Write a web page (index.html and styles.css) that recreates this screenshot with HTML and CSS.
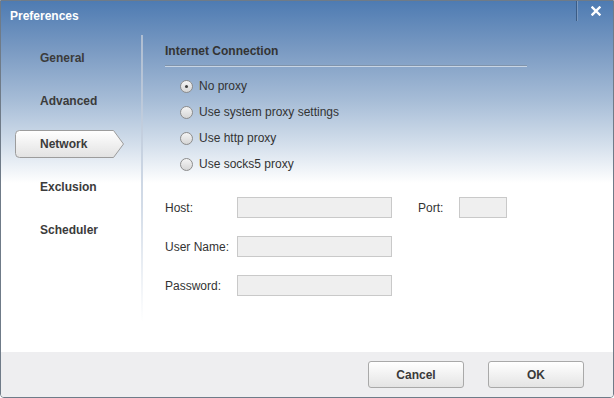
FILE: index.html
```html
<!DOCTYPE html>
<html lang="en">
<head>
    <meta charset="UTF-8">
    <title>Preferences</title>
    <link rel="stylesheet" href="styles.css">
</head>
<body>
    <div class="window">
        <div class="titlebar">
            <div class="title">Preferences</div>
            <div class="close">
                <svg width="10" height="10" viewBox="0 0 10 10"><path d="M1.5 1.5 L8.5 8.5 M8.5 1.5 L1.5 8.5" stroke="#fff" stroke-width="2.4" stroke-linecap="square"/></svg>
            </div>
        </div>

        <div class="main">
            <div class="sidebar">
                <div class="nav-item">General</div>
                <div class="nav-item">Advanced</div>
                <div class="nav-item active">
                    <svg class="tab-shape" width="110" height="29" viewBox="0 0 110 29">
                        <defs>
                            <linearGradient id="tabfill" x1="0" y1="0" x2="0" y2="1">
                                <stop offset="0" stop-color="#ffffff"/>
                                <stop offset="1" stop-color="#e2e2e2"/>
                            </linearGradient>
                        </defs>
                        <path d="M4.5 0.5 H98.5 L108.5 14 L98.5 27.5 H4.5 Q0.5 27.5 0.5 23.5 V4.5 Q0.5 0.5 4.5 0.5 Z" fill="url(#tabfill)" stroke="#9c9c9c"/>
                    </svg>
                    <span>Network</span>
                </div>
                <div class="nav-item">Exclusion</div>
                <div class="nav-item">Scheduler</div>
            </div>
            <div class="divider"></div>

            <div class="content">
                <div class="section-title">Internet Connection</div>

                <div class="radios">
                    <div class="radio-row"><span class="radio checked"></span>No proxy</div>
                    <div class="radio-row"><span class="radio"></span>Use system proxy settings</div>
                    <div class="radio-row"><span class="radio"></span>Use http proxy</div>
                    <div class="radio-row"><span class="radio"></span>Use socks5 proxy</div>
                </div>

                <div class="form">
                    <div class="form-row">
                        <span class="field-label">Host:</span>
                        <span class="field"></span>
                        <span class="port-label">Port:</span>
                        <span class="field port"></span>
                    </div>
                    <div class="form-row">
                        <span class="field-label">User Name:</span>
                        <span class="field"></span>
                    </div>
                    <div class="form-row">
                        <span class="field-label">Password:</span>
                        <span class="field"></span>
                    </div>
                </div>
            </div>
        </div>

        <div class="footer">
            <button class="btn">Cancel</button>
            <button class="btn">OK</button>
        </div>
    </div>
</body>
</html>
```

FILE: styles.css
```css
body, html {
    margin: 0;
    font-family: "Liberation Sans", Arial, sans-serif;
    font-size: 12px;
    background-color: #ffffff;
}
.window {
    width: 614px;
    height: 398px;
    box-sizing: border-box;
    border: 1px solid #6f7b88;
    border-radius: 0 0 4px 4px;
    display: flex;
    flex-direction: column;
    overflow: hidden;
    background: linear-gradient(to bottom, #4e7bb2 0, #7b9bc3 50px, #a7bdd7 100px, #d5e0ec 145px, #ffffff 182px);
}
.titlebar {
    height: 30px;
    display: flex;
    justify-content: space-between;
    align-items: flex-start;
}
.title {
    padding: 8px 0 0 9px;
    line-height: 14px;
    font-weight: bold;
    color: #ffffff;
}
.close {
    width: 37px;
    height: 20px;
    border-left: 1px solid #3b5c85;
    box-shadow: inset 1px 0 #7c9ac0;
    display: flex;
    align-items: center;
    justify-content: center;
    padding-left: 2px;
    box-sizing: border-box;
}
.main {
    flex: 1;
    display: flex;
}
.sidebar {
    width: 140px;
    padding-top: 6px;
}
.nav-item {
    position: relative;
    height: 43px;
    line-height: 43px;
    padding-left: 39px;
    font-weight: bold;
    color: #3b3b3b;
}
.nav-item span {
    position: relative; /* над фигурой вкладки */
}
.tab-shape {
    position: absolute;
    left: 14px;
    top: 7px;
}
.divider {
    width: 2px;
    margin: 4px 0 30px;
    background: linear-gradient(to bottom, #aebdd1, #d3dce8 60%, rgba(255, 255, 255, 0));
}
.content {
    flex: 1;
    padding: 13px 0 0 22px;
    color: #333333;
}
.section-title {
    width: 362px;
    line-height: 14px;
    padding-bottom: 7px;
    font-weight: bold;
    border-bottom: 1px solid #8094ac;
    box-shadow: 0 1px #c8d5e4;
}
.radios {
    margin-top: 7px;
    padding-left: 15px;
}
.radio-row {
    height: 26px;
    display: flex;
    align-items: center;
    gap: 6px;
}
.radio {
    width: 13px;
    height: 13px;
    box-sizing: border-box;
    border: 1px solid #8c8c8c;
    border-radius: 50%;
    background: linear-gradient(to bottom, #f4f4f4, #d6d6d6);
    display: flex;
    align-items: center;
    justify-content: center;
}
.radio.checked::after {
    content: '';
    width: 3px;
    height: 3px;
    border-radius: 50%;
    background: #404040;
}
.form {
    margin-top: 20px;
    display: flex;
    flex-direction: column;
    gap: 18px;
}
.form-row {
    height: 21px;
    display: flex;
    align-items: center;
}
.field-label {
    width: 72px;
}
.field {
    width: 155px;
    height: 21px;
    box-sizing: border-box;
    border: 1px solid #c9c9c9;
    background: #efefef;
}
.port-label {
    width: 41px;
    margin-left: 26px;
}
.field.port {
    width: 48px;
}
.footer {
    height: 45px;
    background: #eeeef0;
    display: flex;
    justify-content: flex-end;
    align-items: flex-start;
    gap: 24px;
    padding: 9px 29px 0 0;
    box-sizing: border-box;
}
.btn {
    width: 96px;
    height: 27px;
    border: 1px solid #a9a9a9;
    border-radius: 3px;
    background: linear-gradient(to bottom, #ffffff, #e4e4e4);
    font-family: "Liberation Sans", Arial, sans-serif;
    font-size: 12px;
    font-weight: bold;
    color: #3a3a3a;
    padding: 0;
}
```
